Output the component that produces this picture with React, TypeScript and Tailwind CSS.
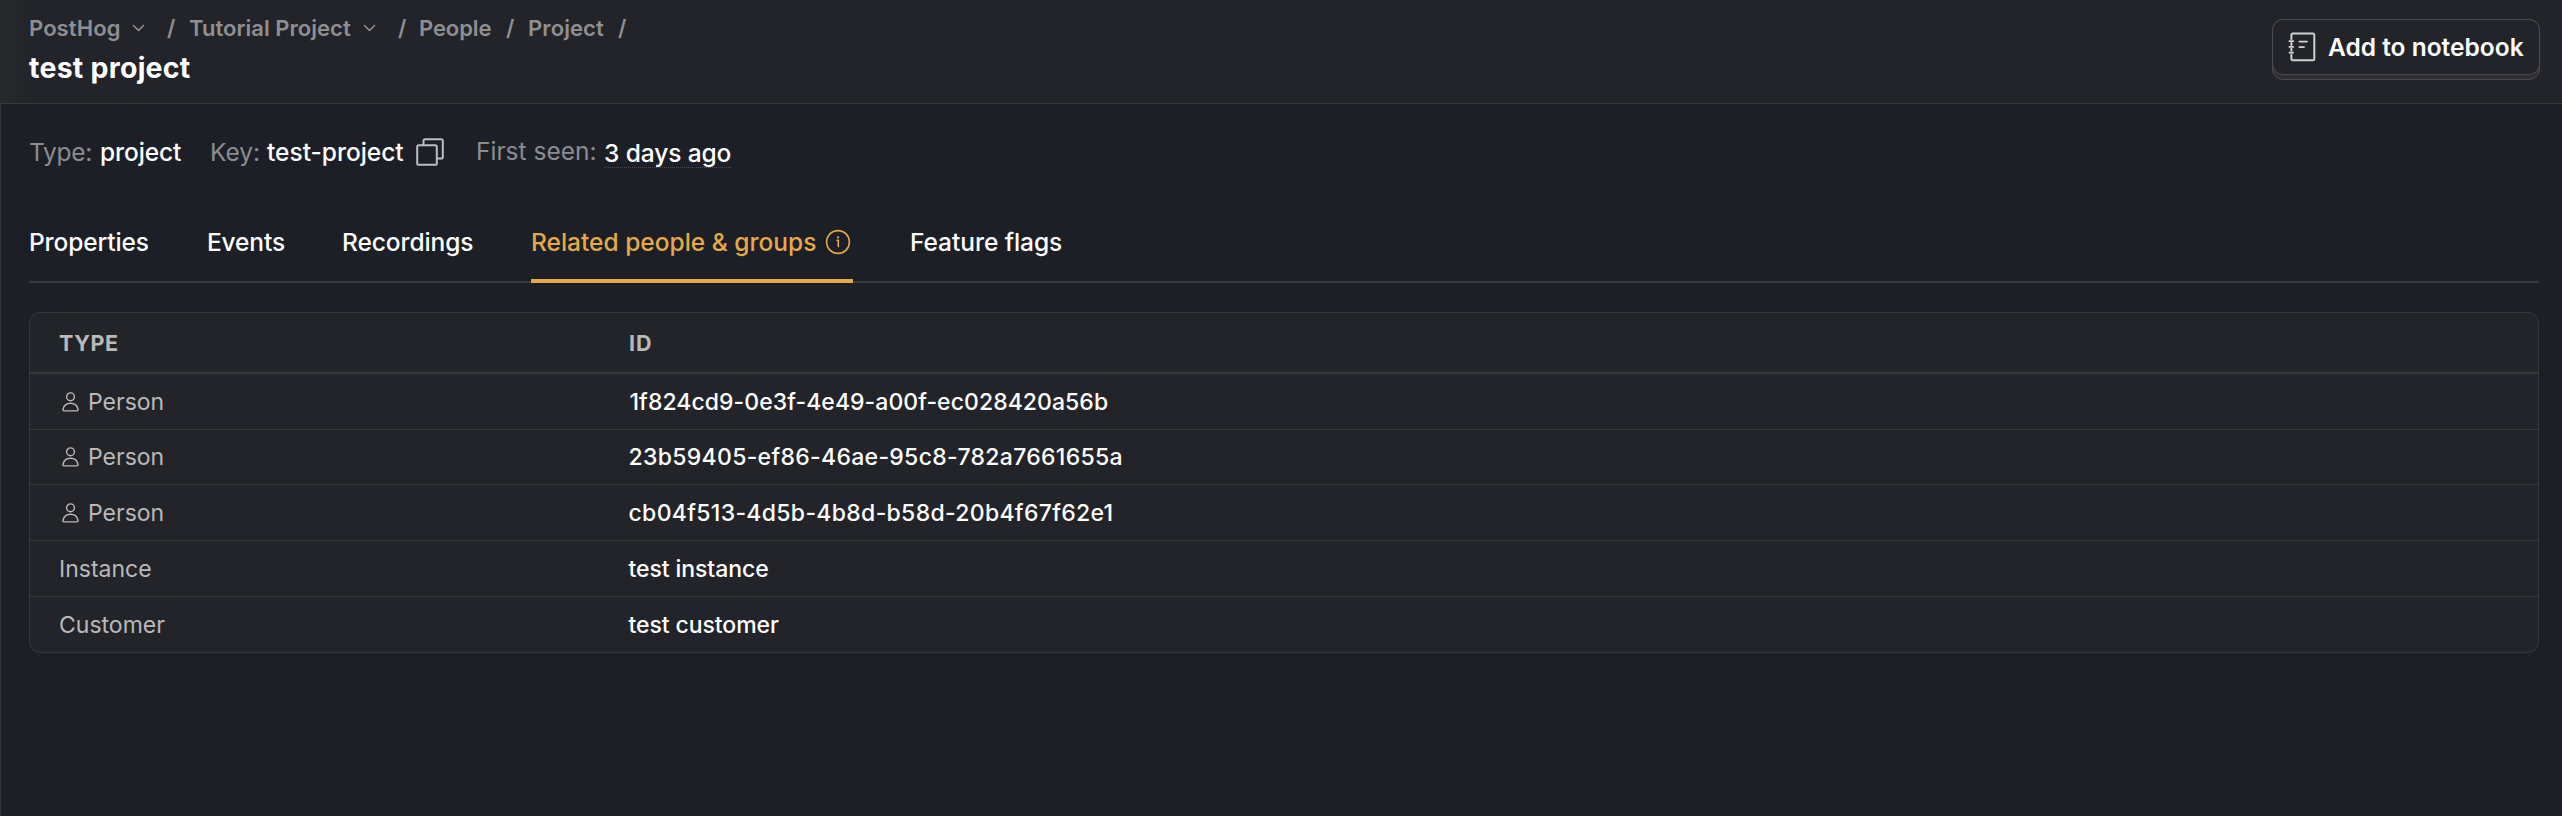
import type { ReactNode } from 'react';

function Chevron({ className }: { className: string }) {
  return (
    <svg className={`shrink-0 ${className}`} width="13" height="8" viewBox="0 0 13 8" fill="none" stroke="currentColor" strokeWidth="1.6" strokeLinecap="round" strokeLinejoin="round">
      <path d="M1.5 1.5 6.5 6.5 11.5 1.5" />
    </svg>
  );
}

function Crumb({ className, children }: { className: string; children: ReactNode }) {
  return <span className={`flex shrink-0 items-center ${className}`}>{children}</span>;
}

function CopyIcon() {
  return (
    <svg className="ml-[12px] mt-[3.5px] shrink-0" width="28" height="28" viewBox="0 0 28 28" fill="none" stroke="#bdbdbf" strokeWidth="2" strokeLinejoin="round">
      <rect x="1.2" y="7.2" width="19.6" height="19.6" rx="1.6" />
      <path d="M7.5 7V2.8Q7.5 1.2 9.1 1.2H25.2Q26.8 1.2 26.8 2.8V18.9Q26.8 20.5 25.2 20.5H21" />
    </svg>
  );
}

function NotebookIcon() {
  return (
    <svg className="shrink-0" width="28" height="30" viewBox="0 0 28 30" fill="none" stroke="#d0d2d0" strokeWidth="2" strokeLinecap="round" strokeLinejoin="round">
      <path d="M3.4 7.2V3Q3.4 1.5 4.9 1.5H24.8Q26.3 1.5 26.3 3V26.8Q26.3 28.3 24.8 28.3H4.9Q3.4 28.3 3.4 26.8V22.6M3.4 11V13M3.4 16.8V18.8" />
      <path d="M1.4 9.2H5.2M1.4 14.9H5.2M1.4 20.6H5.2M11.4 9.6H19M11.4 15.1H16" strokeWidth="1.8" />
    </svg>
  );
}

function InfoIcon() {
  return (
    <svg className="ml-[9px] mt-[-1px] shrink-0" width="26" height="26" viewBox="0 0 26 26" fill="none" stroke="currentColor" strokeWidth="1.6" strokeLinecap="round" strokeLinejoin="round">
      <circle cx="13" cy="13" r="11.4" />
      <path d="M12 11.3H13.3V17.6" />
      <circle cx="13.1" cy="8.4" r="1.1" fill="currentColor" stroke="none" />
    </svg>
  );
}

function PersonIcon() {
  return (
    <svg className="ml-[3px] mr-[9px] shrink-0" width="17" height="20" viewBox="0 0 17 20" fill="none" stroke="#b9b9ba" strokeWidth="1.4" strokeLinejoin="round">
      <circle cx="8.5" cy="4.8" r="3.9" />
      <path d="M8.5 11.3C4.2 11.3 1.9 13.8 1 17.1Q.6 18.9 2.3 18.9H14.7Q16.4 18.9 16 17.1C15.1 13.8 12.8 11.3 8.5 11.3Z" />
    </svg>
  );
}

const rows = [
  { type: 'Person', person: true, id: '1f824cd9-0e3f-4e49-a00f-ec028420a56b', h: 'h-[56px]', track: 'ml-[1px] tracking-[0.06px]' },
  { type: 'Person', person: true, id: '23b59405-ef86-46ae-95c8-782a7661655a', h: 'h-[55px]', track: 'tracking-[0.31px]' },
  { type: 'Person', person: true, id: 'cb04f513-4d5b-4b8d-b58d-20b4f67f62e1', h: 'h-[56px]', track: 'tracking-[0.32px]' },
  { type: 'Instance', person: false, id: 'test instance', h: 'h-[56px]', track: 'tracking-[-0.08px]' },
  { type: 'Customer', person: false, id: 'test customer', h: 'h-[56px]', track: 'tracking-[-0.08px]' },
];

export default function App() {
  return (
    <div className="flex h-[816px] w-[2562px] flex-col overflow-hidden whitespace-nowrap bg-[#1d1f27] font-['Inter',sans-serif] text-white antialiased">
      <header className="flex h-[104px] shrink-0 justify-between border-b border-[#37383c] bg-[#232429] bg-[linear-gradient(to_right,#28292d,#232429_32px)] pl-[29px] pr-[22px]">
        <div className="flex flex-col pt-[13px]">
          <nav className="flex h-[30px] items-center text-[22px] font-semibold leading-[30px] text-[#8f8f92]">
            <Crumb className="w-[138px] tracking-[0.1px]">PostHog<Chevron className="ml-[11px]" /></Crumb>
            <Crumb className="w-[22px]">/</Crumb>
            <Crumb className="w-[209px] tracking-[0.04px]">Tutorial Project<Chevron className="ml-[12px]" /></Crumb>
            <Crumb className="w-[21px]">/</Crumb>
            <Crumb className="w-[87px] tracking-[-0.1px]">People</Crumb>
            <Crumb className="w-[22px]">/</Crumb>
            <Crumb className="w-[90px] tracking-[0.1px]">Project</Crumb>
            <Crumb className="w-[10px]">/</Crumb>
          </nav>
          <h1 className="mt-[7px] h-[36px] text-[28.5px] font-bold leading-[36px] tracking-[0.25px]">test project</h1>
        </div>
        <button className="mt-[19px] flex h-[61px] w-[268px] flex-col rounded-[11px] border border-[#4b4c51] bg-[#303030]">
          <span className="mx-[-1px] mt-[-1px] flex h-[56px] w-[268px] shrink-0 items-center rounded-[11px] border border-[#4b4c51] bg-[#232429] pl-[15px]">
            <NotebookIcon />
            <span className="ml-[12px] text-[24.5px] font-semibold leading-[36px]">Add to notebook</span>
          </span>
        </button>
      </header>

      <main className="flex grow flex-col border-l border-[#323338] pl-[28px] pr-[23px]">
        <div className="mt-[30px] flex h-[36px] text-[24.5px] leading-[36px]">
          <span className="w-[71px] tracking-[-0.3px] text-[#8b8c90]">Type:</span>
          <span className="w-[110px] font-medium tracking-[-0.1px]">project</span>
          <span className="w-[57px] text-[#8b8c90]">Key:</span>
          <span className="w-[137px] font-medium tracking-[-0.02px]">test-project</span>
          <CopyIcon />
          <span className="ml-[32px] mt-[-1px] w-[128px] text-[#8b8c90]">First seen:</span>
          <span className="mt-[1px] h-[33px] border-b border-dotted border-[#4a4b50] font-medium tracking-[-0.1px]">3 days ago</span>
        </div>

        <div className="mt-[54px] flex h-[59px] shrink-0 border-b-2 border-[#38393d] text-[24.5px] font-medium leading-[36px]">
          <span className="w-[178px] tracking-[-0.12px]">Properties</span>
          <span className="w-[135px] tracking-[-0.15px]">Events</span>
          <span className="w-[189px] tracking-[-0.1px]">Recordings</span>
          <span className="flex h-[59px] w-[322px] shrink-0 border-b-4 border-[#e5a94a] text-[#e5a94a]">
            <span>Related people &amp; groups</span>
            <span className="flex h-[36px] items-center"><InfoIcon /></span>
          </span>
          <span className="ml-[57px] tracking-[-0.05px]">Feature flags</span>
        </div>

        <section className="mt-[29px] flex w-[2510px] shrink-0 flex-col overflow-hidden rounded-[11px] border border-[#37383c] bg-[#232429]">
          <div className="flex h-[61px] items-center border-b-2 border-[#37383c] pl-[29px] text-[21.5px] font-bold leading-[30px] text-[#b9b9ba]">
            <span className="w-[570px] tracking-[0.6px]">TYPE</span>
            <span className="tracking-[0.9px]">ID</span>
          </div>
          {rows.map((r) => (
            <div key={r.id} className={`flex shrink-0 items-center border-b border-[#37383c] pl-[29px] text-[23px] leading-[36px] last:h-[55px] last:border-b-0 ${r.h}`}>
              <span className="flex w-[569.5px] items-center text-[#b9b9ba]">
                {r.person && <PersonIcon />}
                {r.type}
              </span>
              <span className={`font-medium ${r.track}`}>{r.id}</span>
            </div>
          ))}
        </section>
      </main>
    </div>
  );
}
